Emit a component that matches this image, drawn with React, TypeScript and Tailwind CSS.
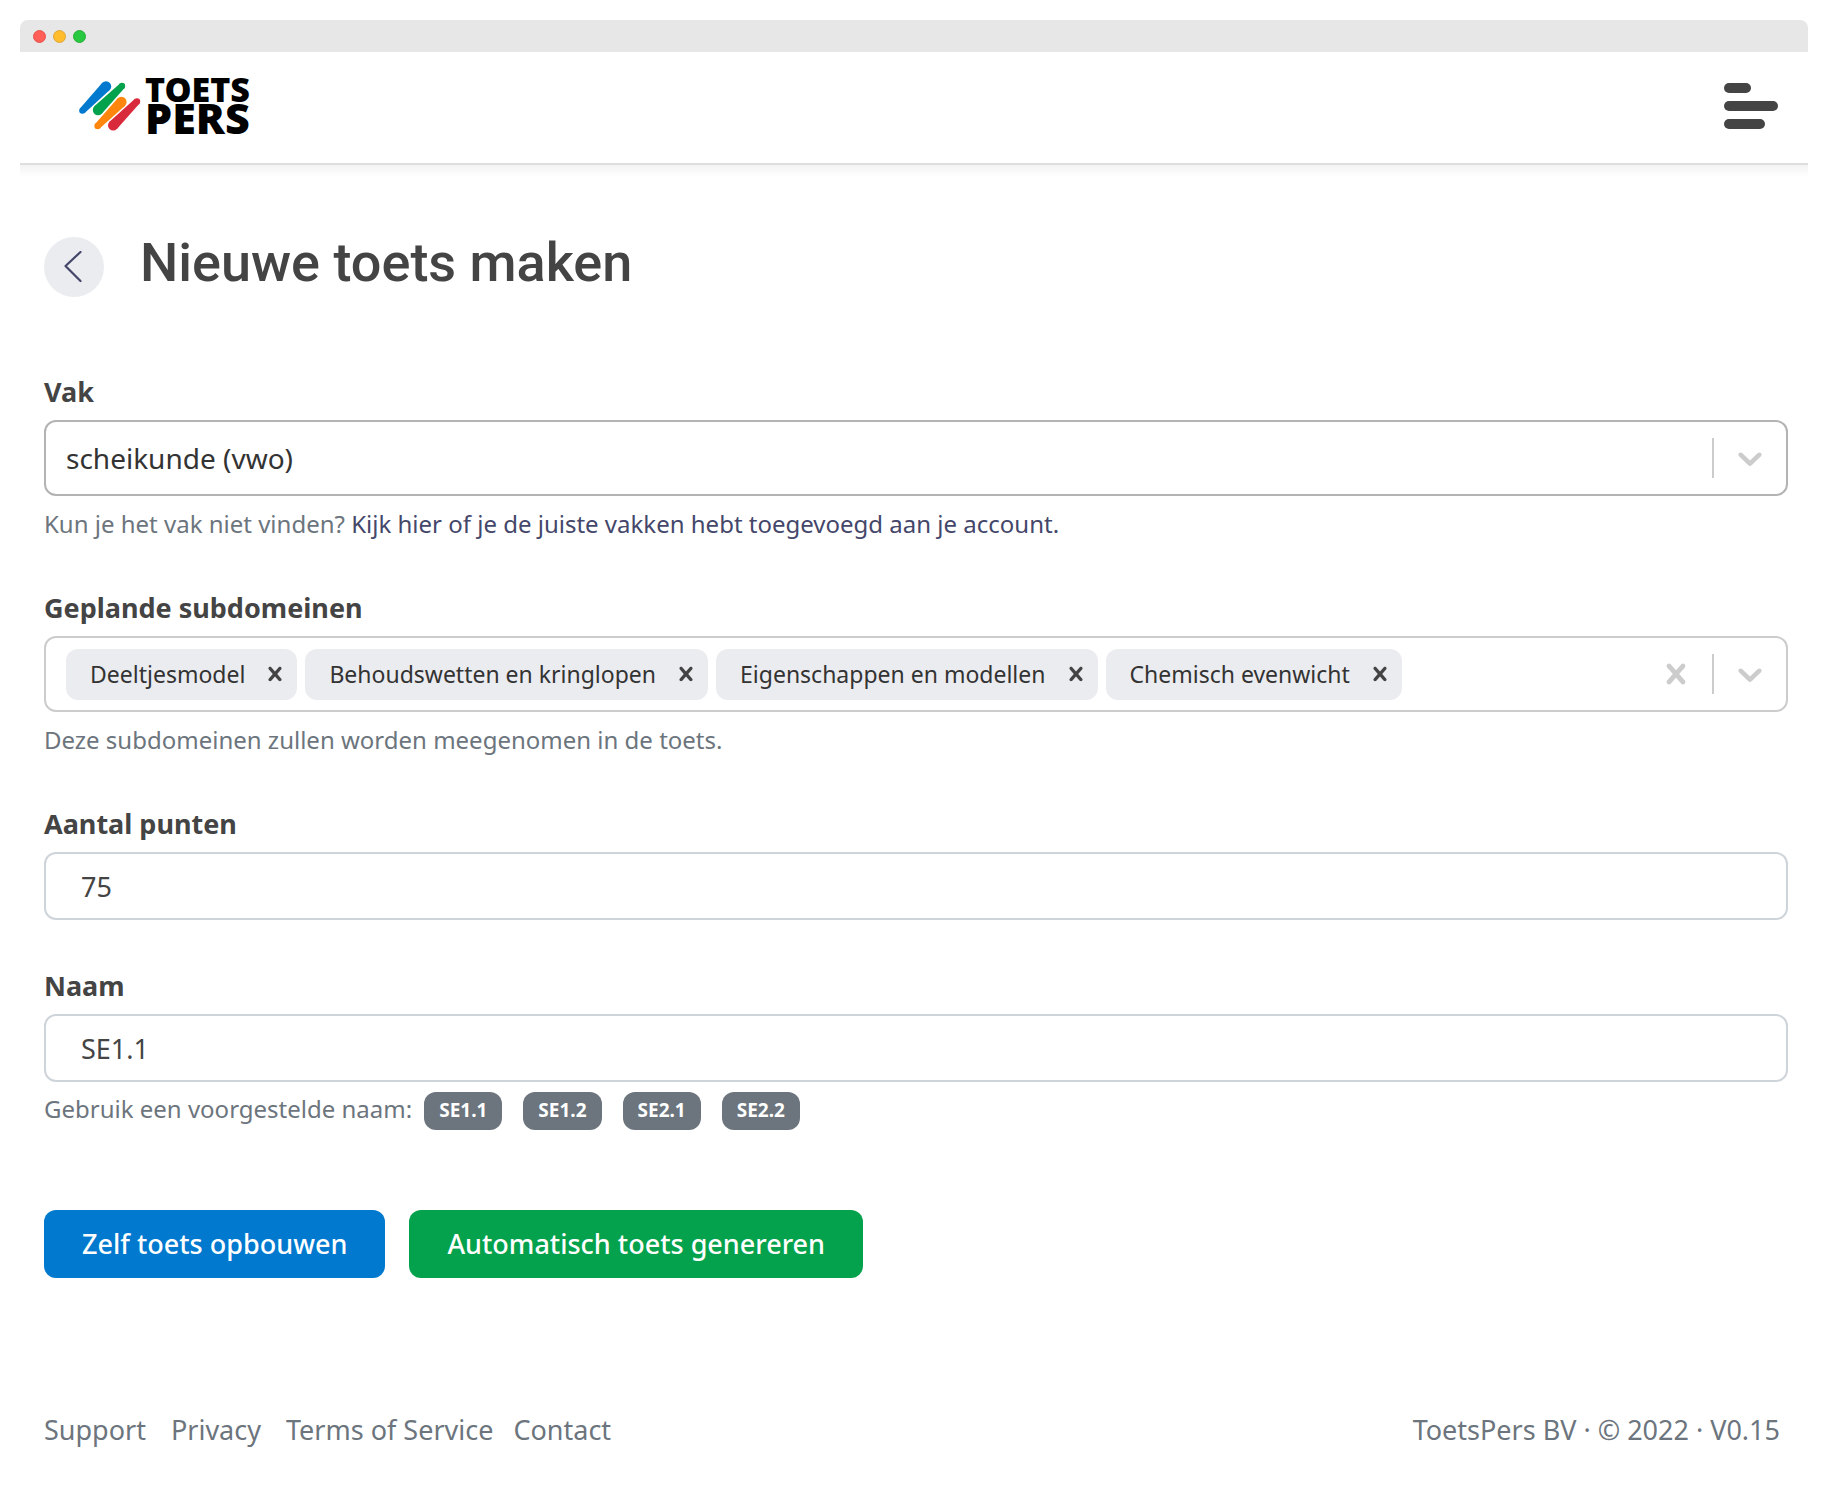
import type { ReactNode } from "react";

const subdomains = ["Deeltjesmodel", "Behoudswetten en kringlopen", "Eigenschappen en modellen", "Chemisch evenwicht"];
const suggestions = ["SE1.1", "SE1.2", "SE2.1", "SE2.2"];

const CROSS =
  "M14.348 14.849c-0.469 0.469-1.229 0.469-1.697 0l-2.651-3.030-2.651 3.029c-0.469 0.469-1.229 0.469-1.697 0-0.469-0.469-0.469-1.229 0-1.697l2.758-3.15-2.759-3.152c-0.469-0.469-0.469-1.228 0-1.697s1.228-0.469 1.697 0l2.652 3.031 2.651-3.031c0.469-0.469 1.228-0.469 1.697 0s0.469 1.229 0 1.697l-2.758 3.152 2.758 3.15c0.469 0.469 0.469 1.229 0 1.698z";
const CHEVRON =
  "M4.516 7.548c0.436-0.446 1.043-0.481 1.576 0l3.908 3.747 3.908-3.747c0.533-0.481 1.141-0.446 1.574 0 0.436 0.445 0.408 1.197 0 1.615-0.406 0.418-4.695 4.502-4.695 4.502-0.217 0.223-0.502 0.335-0.787 0.335s-0.57-0.112-0.789-0.335c0 0-4.287-4.084-4.695-4.502s-0.436-1.17 0-1.615z";

function Icon({ d, className }: { d: string; className: string }) {
  return (
    <svg viewBox="0 0 20 20" fill="currentColor" aria-hidden="true" className={className}>
      <path d={d} />
    </svg>
  );
}

function Logo() {
  return (
    <a href="#" aria-label="ToetsPers" className="flex items-center gap-1 text-black">
      <svg viewBox="0 0 62 50" className="h-[50px] w-[62px]" aria-hidden="true">
        <g fill="#0079cf">
          <circle cx="27" cy="5.4" r="5.2" />
          <circle cx="3.4" cy="29.6" r="3.2" />
          <path d="M23.3 1.7 30.7 9.1 5.7 31.9 1.1 27.3Z" />
        </g>
        <g fill="#04a24c">
          <circle cx="43" cy="5" r="3.2" />
          <circle cx="19" cy="29" r="5.2" />
          <path d="M40.7 2.7 45.3 7.3 22.7 32.7 15.3 25.3Z" />
        </g>
        <g fill="#ff860d">
          <circle cx="42.4" cy="21" r="5.2" />
          <circle cx="18.6" cy="45" r="3.2" />
          <path d="M38.7 17.3 46.1 24.7 20.9 47.3 16.3 42.7Z" />
        </g>
        <g fill="#d92a3c">
          <circle cx="58" cy="20.4" r="3.2" />
          <circle cx="34.2" cy="44.4" r="5.2" />
          <path d="M55.7 18.1 60.3 22.7 37.9 48.1 30.5 40.7Z" />
        </g>
      </svg>
      <span className="flex flex-col font-black">
        <span className="text-[34px] leading-6">TOETS</span>
        <span className="text-[43px] leading-[34px]">PERS</span>
      </span>
    </a>
  );
}

function Field({ id, label, help, children }: { id: string; label: string; help?: ReactNode; children: ReactNode }) {
  return (
    <div>
      <label htmlFor={id} className="mb-2 block text-[27px] leading-10 font-bold">
        {label}
      </label>
      {children}
      {help && <div className="mt-[10px] text-2xl leading-9 text-[#6c757d]">{help}</div>}
    </div>
  );
}

const inputClass = "block h-[68px] w-full rounded-xl border-2 border-[#ced4da] bg-white px-[35px] text-[27px] outline-none";

export default function App() {
  return (
    <div className="px-5 pt-5 text-[#444] [font-family:'Noto_Sans','Open_Sans',sans-serif]">
      <div className="flex h-8 items-center gap-[7px] rounded-t-lg bg-[#e7e7e7] px-[13px]">
        <span className="size-[13px] rounded-full border border-[#e8524b] bg-[#ff5f57]" />
        <span className="size-[13px] rounded-full border border-[#e0a63a] bg-[#ffbd2e]" />
        <span className="size-[13px] rounded-full border border-[#26ae38] bg-[#28c940]" />
      </div>

      <header className="flex h-[113px] items-center justify-between border-b-2 border-[#dedede] pr-[30px] pb-1 pl-[59px]">
        <Logo />
        <button type="button" aria-label="Menu" className="flex w-[54px] flex-col gap-2">
          <span className="h-[10px] w-[27px] rounded-full bg-[#444]" />
          <span className="h-[10px] w-full rounded-full bg-[#444]" />
          <span className="h-[10px] w-[41px] rounded-full bg-[#444]" />
        </button>
      </header>
      <div className="h-3 bg-linear-to-b from-[#f3f3f3] to-white" />

      <main className="pt-[60px] pr-5 pl-6">
        <div className="flex items-center gap-9">
          <a href="#" aria-label="Terug" className="flex size-[60px] items-center justify-center rounded-full bg-[#ebecf0]">
            <svg viewBox="0 0 32 32" className="size-8" fill="none" stroke="#44476a" strokeWidth="2.2" strokeLinecap="round" strokeLinejoin="round" aria-hidden="true">
              <path d="M22.5 1 7.5 15l15 15" />
            </svg>
          </a>
          <h1 className="pb-2 text-[54px] leading-[52px] font-medium [font-family:Roboto,sans-serif]">Nieuwe toets maken</h1>
        </div>

        <form className="mt-[75px]" onSubmit={(e) => e.preventDefault()}>
          <div className="flex flex-col gap-[46px]">
            <Field
              id="vak"
              label="Vak"
              help={
                <>
                  Kun je het vak niet vinden?{" "}
                  <a href="#" className="text-[#44476a]">
                    Kijk hier of je de juiste vakken hebt toegevoegd aan je account.
                  </a>
                </>
              }
            >
              <div className="relative flex h-[76px] items-center rounded-xl border-2 border-[#b3b3b3]">
                <select id="vak" className="h-full w-full appearance-none rounded-xl bg-transparent px-5 text-[28px] text-[#333] outline-none">
                  <option>scheikunde (vwo)</option>
                </select>
                <div className="pointer-events-none absolute right-4 flex items-center gap-4 text-[#ccc]">
                  <span className="h-10 w-[2px] bg-[#ccc]" />
                  <Icon d={CHEVRON} className="size-10" />
                </div>
              </div>
            </Field>

            <Field id="subdomeinen" label="Geplande subdomeinen" help="Deze subdomeinen zullen worden meegenomen in de toets.">
              <div className="flex h-[76px] items-center gap-2 rounded-xl border-2 border-[#ccc] pr-4 pl-5">
                {subdomains.map((name) => (
                  <div key={name} className="flex h-[51px] items-center gap-4 rounded-xl bg-[#ebecf0] pr-2 pl-6 text-[23px] whitespace-nowrap text-[#333]">
                    {name}
                    <button type="button" aria-label={`Verwijder ${name}`}>
                      <Icon d={CROSS} className="size-7 text-[#444]" />
                    </button>
                  </div>
                ))}
                <input id="subdomeinen" className="min-w-0 flex-1 text-[28px] outline-none" />
                <div className="flex items-center gap-4 text-[#ccc]">
                  <button type="button" aria-label="Alles wissen">
                    <Icon d={CROSS} className="size-10" />
                  </button>
                  <span className="h-10 w-[2px] bg-[#ccc]" />
                  <button type="button" aria-label="Openen">
                    <Icon d={CHEVRON} className="size-10" />
                  </button>
                </div>
              </div>
            </Field>

            <Field id="punten" label="Aantal punten">
              <input id="punten" type="text" inputMode="numeric" defaultValue="75" className={inputClass} />
            </Field>

            <Field id="naam" label="Naam">
              <input id="naam" type="text" defaultValue="SE1.1" className={inputClass} />
            </Field>
          </div>

          <div className="mt-[10px] flex items-center text-2xl text-[#6c757d]">
            <span className="pb-1">Gebruik een voorgestelde naam:</span>
            <div className="ml-3 flex gap-[21px]">
              {suggestions.map((name) => (
                <button key={name} type="button" className="h-[38px] rounded-xl bg-[#6c757d] px-[15px] text-[19px] font-bold text-white">
                  {name}
                </button>
              ))}
            </div>
          </div>

          <div className="mt-20 flex gap-6">
            <button type="submit" className="h-[68px] rounded-xl bg-[#0079cf] px-[38px] text-[27px] font-medium text-white">
              Zelf toets opbouwen
            </button>
            <button type="button" className="h-[68px] rounded-xl bg-[#04a24c] px-[38px] text-[27px] font-medium text-white">
              Automatisch toets genereren
            </button>
          </div>
        </form>
      </main>

      <footer className="mt-[132px] flex justify-between pr-7 pb-8 pl-6 text-[27px] leading-10 text-[#6c757d]">
        <nav className="flex">
          <a href="#" className="mr-[25px]">Support</a>
          <a href="#" className="mr-[25px]">Privacy</a>
          <a href="#" className="mr-5">Terms of Service</a>
          <a href="#">Contact</a>
        </nav>
        <span>ToetsPers BV · © 2022 · V0.15</span>
      </footer>
    </div>
  );
}
